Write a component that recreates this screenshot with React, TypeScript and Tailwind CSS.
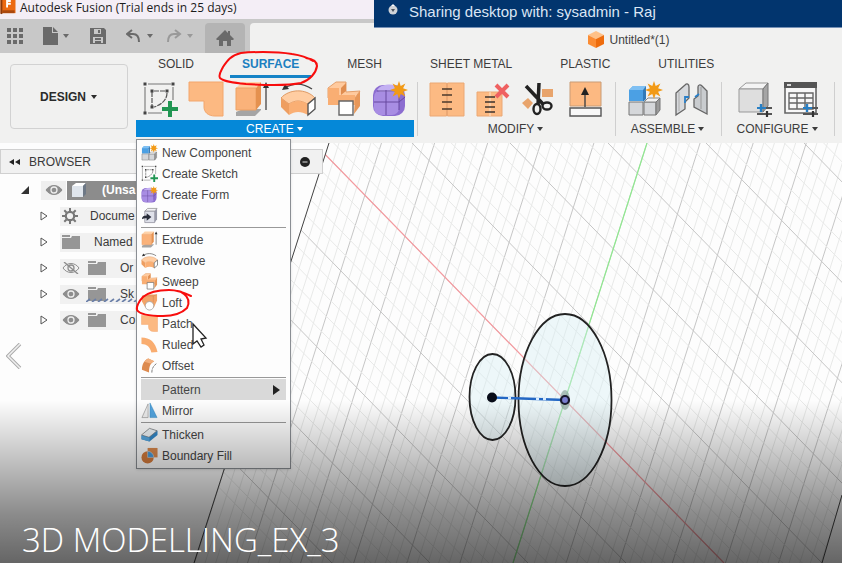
import React from "react";

type IconProps = { className?: string };
type IconType = (props: IconProps) => React.ReactElement;

function Svg({ className, children }: { className?: string; children: React.ReactNode }) {
  return (
    <svg viewBox="0 0 36 36" className={className} fill="none" aria-hidden="true">
      {children}
    </svg>
  );
}

const Star = ({ x, y }: { x: number; y: number }) => (
  <path
    transform={`translate(${x} ${y})`}
    d="M0-9l1.7 4.9L6.4-6.4 4.1-1.7 9 0 4.1 1.7 6.4 6.4 1.7 4.1 0 9-1.7 4.1-6.4 6.4-4.1 1.7-9 0l4.9-1.7L-6.4-6.4l4.7 2.3z"
    fill="#f29a16"
  />
);

const SketchIcon: IconType = ({ className }) => (
  <Svg className={className}>
    <path d="M6 3h23M3 6v25M31 6v13M6 32h14" stroke="#777" strokeWidth="1.1" />
    <path d="M10 11v14M12 10h13M25 12c0 7-6 12-13 14" stroke="#555" strokeWidth="1.2" strokeDasharray="5 1" />
    <path d="M1.500 1.500h3v3h-3zM29.500 1.500h3v3h-3zM1.500 30.500h3v3h-3zM8.500 8.500h3v3h-3zM23.500 8.500h3v3h-3zM8.500 24.500h3v3h-3z" fill="#444" />
    <path d="M26 20h4v6h6v4h-6v6h-4v-6h-6v-4h6z" fill="#219653" />
  </Svg>
);

const PatchIcon: IconType = ({ className }) => (
  <Svg className={className}>
    <path d="M1 1h34v34h-8c-7 0-11-4-11-9v-6H1z" fill="#fcb982" stroke="#f3a66c" />
  </Svg>
);

const ExtrudeIcon: IconType = ({ className }) => (
  <Svg className={className}>
    <path d="M2 31l7-3h18v1l-6 6H2z" fill="#a5a5a5" />
    <path d="M2 7l6-6h19l-5 6z" fill="#ffd3aa" />
    <path d="M2 7h20v22H2z" fill="#fab27a" stroke="#eda164" />
    <path d="M22 7l5-6v22l-5 6z" fill="#e5914f" />
    <path d="M32 29V5" stroke="#444" strokeWidth="1.3" />
    <path d="M32 1l3 6h-6z" fill="#333" />
  </Svg>
);

const RevolveIcon: IconType = ({ className }) => (
  <Svg className={className}>
    <path d="M1 17c8-9 25-10 34 0l-8 6c-6-4-12-4-18 0z" fill="#ffcda2" stroke="#df9b66" />
    <path d="M1 17l8 6v11l-8-8z" fill="#ee9e60" />
    <path d="M9 23c6-4 12-4 19 0v11c-7-4-13-4-19 0z" fill="#faaf74" />
    <path d="M28 23l7-6v11l-7 6z" fill="#fff" stroke="#555" strokeWidth="1.4" />
    <path d="M5 7c8-5 18-5 27 1" stroke="#444" strokeWidth="1.3" />
    <path d="M2 9l3-6 4 5z" fill="#333" />
  </Svg>
);

const SweepIcon: IconType = ({ className }) => (
  <Svg className={className}>
    <path d="M2 7l8-6h10v10l14-1-5 7H2z" fill="#ffca9e" stroke="#e4a06c" />
    <path d="M2 7h11v7h16v10H2z" fill="#f9ae73" />
    <path d="M20 2l-5 5v7l5-4z" fill="#e08d4f" />
    <path d="M29 17l5-7v15l-6 8z" fill="#e79759" />
    <path d="M13 20h14v14H13z" fill="#fff" stroke="#666" strokeWidth="1.4" />
  </Svg>
);

const FormIcon: IconType = ({ className }) => (
  <Svg className={className}>
    <rect x="1" y="4" width="32" height="31" rx="10" fill="#8c6dd0" />
    <rect x="2" y="9" width="25" height="25" rx="7" fill="#a88de3" />
    <path d="M5 9c4-6 16-7 22-3l-5 5H8z" fill="#c3b0f2" />
    <path d="M2 21h25l6-5M14 9v25M5 10h20l5-4M27 11v18" stroke="#67499f" />
    <Star x={27} y={9} />
  </Svg>
);

const StitchIcon: IconType = ({ className }) => (
  <Svg className={className}>
    <path d="M1 2h16.500v33H1zM18.500 2H35v33H18.500z" fill="#fcba83" stroke="#eba874" />
    <path d="M13 8h10M13 14h10M13 21h10M13 28h10" stroke="#4b3a2d" strokeWidth="1.6" />
  </Svg>
);

const UnstitchIcon: IconType = ({ className }) => (
  <Svg className={className}>
    <path d="M2 11h25v24H2z" fill="#fcba83" stroke="#eba874" />
    <path d="M15 11v24" stroke="#ffe4cb" />
    <path d="M10 16h10M10 21h10M10 26h10M10 31h10" stroke="#3c332e" strokeWidth="1.6" />
    <path d="M21 4l12 12M33 4L21 16" stroke="#ef6161" strokeWidth="4" />
  </Svg>
);

const TrimIcon: IconType = ({ className }) => (
  <Svg className={className}>
    <path d="M1 22l6-5 5 5-5 6zM21 8h11v8H21z" fill="#e8a46c" />
    <path d="M5 5l17 18M18 2l-1 22" stroke="#222" strokeWidth="3.5" />
    <ellipse cx="26" cy="25" rx="4.500" ry="3.500" stroke="#222" strokeWidth="2.4" />
    <ellipse cx="16" cy="28" rx="3.500" ry="5" stroke="#222" strokeWidth="2.4" />
  </Svg>
);

const ThickSurfaceIcon: IconType = ({ className }) => (
  <Svg className={className}>
    <path d="M3 1h31v24H3z" fill="#fcb982" stroke="#c99c76" />
    <path d="M3 27h31v8H3z" fill="#f8f8f8" stroke="#555" strokeWidth="1.4" />
    <path d="M18 26V11" stroke="#444" strokeWidth="1.4" />
    <path d="M18 6l4 8h-8z" fill="#222" />
  </Svg>
);

const ComponentIcon: IconType = ({ className }) => (
  <Svg className={className}>
    <path d="M2 9l4-4h13l-3 4v11H2z" fill="#4ba0e4" />
    <path d="M2 9l4-4h13l-3 4z" fill="#7fc0f3" />
    <path d="M16 9l3-4v13l-3 3z" fill="#3179b8" />
    <path d="M2 21h14v13H2zM17 21h12v13H17z" fill="#d5d7da" stroke="#777" />
    <path d="M17 21l4-4h12l-4 4z" fill="#f2f2f2" stroke="#888" />
    <path d="M29 21l4-4v12l-4 5z" fill="#9a9a9a" stroke="#777" />
    <Star x={27} y={9} />
  </Svg>
);

const JointIcon: IconType = ({ className }) => (
  <Svg className={className}>
    <path d="M3 12l9-8c2-2 4-1 4 2v11l-4 4v7l-9 6z" fill="#d8dadd" stroke="#666" strokeWidth="1.3" />
    <path d="M6 11v19" stroke="#aaa" />
    <path d="M34 33l-13-7v-8l4-3V6c0-2 2-3 4-1l5 5z" fill="#c9cccf" stroke="#666" strokeWidth="1.3" />
    <path d="M28 6v22" stroke="#999" />
    <path d="M12 22v-6h4M22 16l4-3" stroke="#2a80c9" strokeWidth="1.8" />
  </Svg>
);

const Sliders = () => (
  <>
    <path d="M20 27h15M20 33h15" stroke="#555" strokeWidth="1.8" />
    <path d="M24 23v8" stroke="#287fc4" strokeWidth="2.4" />
    <path d="M20 27h9" stroke="#287fc4" strokeWidth="2" />
    <path d="M30 30v6" stroke="#333" strokeWidth="2.2" />
  </>
);

const ConfigureIcon: IconType = ({ className }) => (
  <Svg className={className}>
    <path d="M2 8l7-6h22l-5 6z" fill="#f4f4f4" stroke="#999" />
    <path d="M2 8h24v23H2z" fill="#dedede" stroke="#999" />
    <path d="M26 8l5-6v23l-5 6z" fill="#a5a5a5" stroke="#777" />
    <Sliders />
  </Svg>
);

const TableIcon: IconType = ({ className }) => (
  <Svg className={className}>
    <path d="M2 2h31v30H2z" fill="#f8f8f8" stroke="#666" strokeWidth="1.6" />
    <path d="M1 1h33v6H1z" fill="#555" />
    <path d="M4 3h4v2H4z" fill="#ddd" />
    <path d="M6 12h24v16H6zM6 17h24M6 22h24M14 12v16M22 12v16" stroke="#666" strokeWidth="1.4" />
    <Sliders />
  </Svg>
);

const DeriveIcon: IconType = ({ className }) => (
  <Svg className={className}>
    <path d="M8 9l6-6h20l-5 6z" fill="#f3f3f6" stroke="#888" strokeWidth="1.5" />
    <path d="M8 9h21v24H8z" fill="#dfe1ea" stroke="#8a8a96" strokeWidth="1.5" />
    <path d="M29 9l5-6v23l-5 7z" fill="#9799a8" />
    <path d="M2 26c0-6 4-8 10-8v-5l10 8-10 8v-5c-5 0-7 1-10 2z" fill="#292d3a" />
  </Svg>
);

const LoftIcon: IconType = ({ className }) => (
  <Svg className={className}>
    <path d="M2 4l8-3h24v13l-7 15L9 28 2 16z" fill="#f2a468" />
    <path d="M2 4h24l8-3M26 4v14" stroke="#c98350" />
    <circle cx="18" cy="25" r="9" fill="#fff" stroke="#999" strokeWidth="1.5" />
  </Svg>
);

const RuledIcon: IconType = ({ className }) => (
  <Svg className={className}>
    <path d="M1 3c18 0 30 10 34 31l-13 1C19 23 12 17 1 17z" fill="#f9ad70" />
  </Svg>
);

const OffsetIcon: IconType = ({ className }) => (
  <Svg className={className}>
    <path d="M2 27C2 15 7 7 15 3l13 6c-8 4-11 11-11 24z" fill="#dd8b50" />
    <path d="M7 10c2-3 5-6 9-7l12 6-8 5z" fill="#f2b07e" />
    <path d="M23 33c0-10 4-15 11-20" stroke="#777" strokeWidth="2" strokeDasharray="6 2" />
  </Svg>
);

const MirrorIcon: IconType = ({ className }) => (
  <Svg className={className}>
    <path d="M15 4v29H2z" fill="#eee" stroke="#999" strokeWidth="1.5" />
    <path d="M19 2l15 31H19z" fill="#54a5df" stroke="#3184bd" />
  </Svg>
);

const ThickenIcon: IconType = ({ className }) => (
  <Svg className={className}>
    <path d="M1 20L18 6l17 4v9L18 33 1 28z" fill="#3287c7" />
    <path d="M1 19L18 5l16 5-17 14z" fill="#eef3f6" stroke="#777" strokeWidth="1.5" />
    <path d="M1 20l17 5v8L1 28z" fill="#57a7df" />
  </Svg>
);

const BoundaryIcon: IconType = ({ className }) => (
  <Svg className={className}>
    <path d="M14 2h21v20H14z" fill="#dc8a4d" />
    <circle cx="14" cy="22" r="13" fill="#d67c3c" />
    <path d="M14 9a13 13 0 0 1 13 13H14z" fill="#4a9cda" stroke="#eee" />
  </Svg>
);

const Caret = ({ className = "" }: IconProps) => (
  <svg viewBox="0 0 8 6" className={`h-1.5 w-2 ${className}`} fill="currentColor" aria-hidden="true">
    <path d="M1 1h6L4 5z" />
  </svg>
);

function TitleBar() {
  return (
    <div className="flex h-[19px] items-start bg-[#f4eef6] text-[#1c1c1c]">
      <svg viewBox="0 0 16 16" className="h-[15px] w-4" aria-hidden="true">
        <path d="M0 0h16v14H0z" fill="#ec6a12" />
        <path d="M0 0h2v15H0z" fill="#8c3a0b" />
        <path d="M2 11h13v3H2z" fill="#a9480f" />
        <path d="M6 0h5v2H8v1h3v2H8v3H6z" fill="#fff" />
      </svg>
      <h1 className="pl-1 font-['Open_Sans','Noto_Sans',sans-serif] text-xs leading-[15px]">
        Autodesk Fusion (Trial ends in 25 days)
      </h1>
    </div>
  );
}

function QuickAccess() {
  return (
    <div className="flex h-[34px] items-end bg-[#c8c8c8] text-[#6a6a6a]">
      <div className="flex h-full w-[205px] items-center pl-[7px]">
        <button aria-label="Data panel">
          <svg viewBox="0 0 16 16" className="size-4" fill="currentColor">
            <path d="M0 0h4v4H0zM6 0h4v4H6zM12 0h4v4h-4zM0 6h4v4H0zM6 6h4v4H6zM12 6h4v4h-4zM0 12h4v4H0zM6 12h4v4H6zM12 12h4v4h-4z" />
          </svg>
        </button>
        <button aria-label="File" className="ml-5 flex items-center gap-1">
          <svg viewBox="0 0 15 18" className="h-[18px] w-[15px]" fill="currentColor">
            <path d="M0 0h9v6h6v12H0zM10 0l5 5h-5z" />
          </svg>
          <Caret />
        </button>
        <button aria-label="Save" className="ml-5">
          <svg viewBox="0 0 16 16" className="size-4">
            <path d="M0 0h14l2 2v14H0z" fill="currentColor" />
            <path d="M4 1h7v5H4zM3 9h10v6H3z" fill="#c8c8c8" />
            <path d="M8 2h2v3H8zM5 10h6v2H5zM5 13h6v2H5z" fill="currentColor" />
          </svg>
        </button>
        <button aria-label="Undo" className="ml-5 flex items-center gap-1">
          <svg viewBox="0 0 16 14" className="h-3.5 w-4" fill="none" stroke="currentColor" strokeWidth="2">
            <path d="M6 1L1 5l5 4M1 5h6c4 0 6 3 6 8" />
          </svg>
          <Caret />
        </button>
        <button aria-label="Redo" className="ml-3 flex items-center gap-1 text-[#999]">
          <svg viewBox="0 0 16 14" className="h-3.5 w-4" fill="none" stroke="currentColor" strokeWidth="2">
            <path d="M9 1l5 4-5 4M14 5H8c-4 0-6 3-6 8" />
          </svg>
          <Caret />
        </button>
      </div>
      <button aria-label="Home" className="mr-[5px] flex h-[30px] w-10 items-center justify-center rounded-t bg-[#b4b4b4]">
        <svg viewBox="0 0 18 16" className="h-4 w-[18px]" fill="currentColor">
          <path d="M9 0l3 3V1h2v4l4 4-1 1h-2v6h-4v-5H7v5H3v-6H1L0 9z" />
        </svg>
      </button>
      <button className="flex h-[30px] flex-1 items-center justify-center gap-[5px] rounded-tl bg-[#f1f1f0] pt-[3px] pl-[166px] text-xs text-[#3f3f3f]">
        <svg viewBox="0 0 16 17" className="h-[17px] w-4" aria-hidden="true">
          <path d="M8 0l8 4-8 4-8-4z" fill="#ffc187" />
          <path d="M0 4l8 4v9l-8-4z" fill="#fb8c33" />
          <path d="M16 4L8 8v9l8-4z" fill="#ee6c0d" />
        </svg>
        Untitled*(1)
      </button>
    </div>
  );
}

const tabs = ["SOLID", "SURFACE", "MESH", "SHEET METAL", "PLASTIC", "UTILITIES"];

const groups: { label: string; active?: boolean; width: string; icons: [string, IconType][] }[] = [
  {
    label: "CREATE",
    active: true,
    width: "w-[278px]",
    icons: [
      ["Create Sketch", SketchIcon],
      ["Patch", PatchIcon],
      ["Extrude", ExtrudeIcon],
      ["Revolve", RevolveIcon],
      ["Sweep", SweepIcon],
      ["Create Form", FormIcon],
    ],
  },
  {
    label: "MODIFY",
    width: "w-[192px]",
    icons: [
      ["Stitch", StitchIcon],
      ["Unstitch", UnstitchIcon],
      ["Trim", TrimIcon],
      ["Press Pull", ThickSurfaceIcon],
    ],
  },
  {
    label: "ASSEMBLE",
    width: "w-[100px]",
    icons: [
      ["New Component", ComponentIcon],
      ["Joint", JointIcon],
    ],
  },
  {
    label: "CONFIGURE",
    width: "w-[107px]",
    icons: [
      ["Configure", ConfigureIcon],
      ["Configuration Table", TableIcon],
    ],
  },
];

function Ribbon() {
  return (
    <div className="flex h-[90px] bg-[#f1f1f0] text-xs text-[#3c3c3c]">
      <button className="mt-[11px] mr-2 ml-2.5 flex h-[65px] w-[118px] shrink-0 items-center justify-center gap-1 rounded border border-[#d2d2d2] font-bold text-[#2b2b2b]">
        DESIGN <Caret />
      </button>
      <div className="min-w-0 flex-1">
        <nav className="flex h-[25px] gap-6 pl-2.5">
          {tabs.map((tab) => (
            <button
              key={tab}
              className={
                tab === "SURFACE"
                  ? "border-b-3 border-[#1583c6] px-3 font-bold whitespace-nowrap text-[#1b7fc0]"
                  : "border-b-3 border-transparent px-3 whitespace-nowrap"
              }
            >
              {tab}
            </button>
          ))}
        </nav>
        <div className="flex">
          {groups.map((g) => (
            <div key={g.label} className="flex shrink-0">
              <section className={g.width}>
                <div className="flex h-[42px] items-center justify-center">
                  {g.icons.map(([name, Icon]) => (
                    <button key={name} aria-label={name} className="flex w-[46px] justify-center">
                      <Icon className="size-9" />
                    </button>
                  ))}
                </div>
                <button
                  className={
                    g.active
                      ? "flex h-[17px] w-full items-center justify-center gap-0.5 bg-[#0588d8] text-white"
                      : "flex h-[17px] w-full items-center justify-center gap-0.5"
                  }
                >
                  {g.label} <Caret />
                </button>
              </section>
              <div className="mr-[2px] ml-[3px] mt-1 h-[54px] w-px bg-[#cfcfcf]" />
            </div>
          ))}
        </div>
      </div>
    </div>
  );
}

const Eye = ({ off = false }: { off?: boolean }) => (
  <svg viewBox="0 0 18 12" className="h-3 w-[18px] shrink-0" fill="none" aria-hidden="true">
    <path d="M1 6c4-6 12-6 16 0-4 6-12 6-16 0z" fill={off ? "none" : "#8e8e8e"} stroke="#8e8e8e" />
    <circle cx="9" cy="6" r="3" fill={off ? "none" : "#8e8e8e"} stroke={off ? "#8e8e8e" : "#eee"} strokeWidth="1.3" />
    {off && <path d="M2 0l14 12" stroke="#8e8e8e" strokeWidth="1.4" />}
  </svg>
);

const Folder = () => (
  <svg viewBox="0 0 18 14" className="h-3.5 w-[18px] shrink-0" aria-hidden="true">
    <path d="M0 0h8v2H0zM0 3h9l1-2h8v13H0z" fill="#969696" />
  </svg>
);

const Gear = () => (
  <svg viewBox="0 0 16 16" className="size-4" fill="none" stroke="#777" aria-hidden="true">
    <circle cx="8" cy="8" r="4.2" strokeWidth="2.2" />
    <path d="M8 0v3M8 13v3M0 8h3M13 8h3M2.3 2.3l2.2 2.2M11.500 11.500l2.2 2.2M13.7 2.3l-2.2 2.2M4.500 11.500l-2.2 2.2" strokeWidth="2" />
  </svg>
);

const nodes = [
  { label: "Docume", kind: "gear" },
  { label: "Named", kind: "folder" },
  { label: "Or", kind: "hidden" },
  { label: "Sk", kind: "visible" },
  { label: "Co", kind: "visible" },
];

function BrowserPanel() {
  return (
    <aside className="relative w-[323px] pt-1.5 text-xs text-[#3a3a3a]">
      <div className="flex h-[25px] items-center border border-[#d0d0d0] bg-[#f1f1f1] pr-3 pl-[7px]">
        <svg viewBox="0 0 12 8" className="h-2 w-3" fill="#222" aria-hidden="true">
          <path d="M6 1v6L1 4zM12 1v6L7 4z" />
        </svg>
        <h2 className="pl-[9px]">BROWSER</h2>
        <button aria-label="Minimize" className="ml-auto">
          <svg viewBox="0 0 10 10" className="size-2.5">
            <circle cx="5" cy="5" r="5" fill="#222" />
            <path d="M2.500 5h5" stroke="#ddd" />
          </svg>
        </button>
      </div>
      <ul className="w-[137px] whitespace-nowrap">
        <li className="mt-[3px] flex h-[26px] items-center">
          <svg viewBox="0 0 8 8" className="ml-[21px] size-2 shrink-0" aria-hidden="true">
            <path d="M8 0v8H0z" fill="#333" />
          </svg>
          <span className="ml-3 flex h-[19px] w-[25px] shrink-0 items-center justify-center bg-[#efefef]">
            <Eye />
          </span>
          <span className="ml-px flex h-[19px] flex-1 items-center bg-[#8c8c8c] pl-1 font-bold text-white">
            <svg viewBox="0 0 16 16" className="size-4 shrink-0" aria-hidden="true">
              <path d="M1 4l4-3h10l-3 3z" fill="#fff" />
              <path d="M1 4h11v11H1z" fill="#dfe5ec" />
              <path d="M12 4l3-3v11l-3 3z" fill="#6d7886" />
            </svg>
            <span className="pl-[15px]">(Unsa</span>
          </span>
        </li>
        {nodes.map((n) => (
          <li key={n.label} className="flex h-[26px] items-center">
            <svg viewBox="0 0 8 10" className="ml-10 h-2.5 w-2 shrink-0" fill="none" aria-hidden="true">
              <path d="M1 1l6 4-6 4z" stroke="#555" />
            </svg>
            <span className="ml-3 flex h-[19px] flex-1 items-center bg-[#f1f1f1]">
              {n.kind === "gear" && <span className="pr-3 pl-0.5"><Gear /></span>}
              {n.kind === "folder" && <span className="pr-3.5 pl-0.5"><Folder /></span>}
              {(n.kind === "hidden" || n.kind === "visible") && (
                <span className="flex items-center gap-2 pr-3.5 pl-0.5">
                  <Eye off={n.kind === "hidden"} />
                  <Folder />
                </span>
              )}
              {n.label}
            </span>
          </li>
        ))}
      </ul>
      <svg viewBox="0 0 50 4" className="absolute top-[155px] left-[86px] h-1 w-[50px]" aria-hidden="true">
        {Array.from({ length: 9 }, (_, i) => (
          <path key={i} d={`M${i * 6} 4l4-3`} stroke="#6a7fa8" strokeWidth="1.6" />
        ))}
      </svg>
      <button aria-label="Previous" className="mt-2.5 ml-1.5 block">
        <svg viewBox="0 0 16 26" className="h-[26px] w-4" fill="none">
          <path d="M14 1L2 13l12 12" stroke="#aaa" strokeWidth="3.500" />
          <path d="M14 1L2 13l12 12" stroke="#f0f0f0" strokeWidth="1.500" />
        </svg>
      </button>
    </aside>
  );
}

const menu: (null | { label: string; icon?: IconType; open?: boolean })[] = [
  { label: "New Component", icon: ComponentIcon },
  { label: "Create Sketch", icon: SketchIcon },
  { label: "Create Form", icon: FormIcon },
  { label: "Derive", icon: DeriveIcon },
  null,
  { label: "Extrude", icon: ExtrudeIcon },
  { label: "Revolve", icon: RevolveIcon },
  { label: "Sweep", icon: SweepIcon },
  { label: "Loft", icon: LoftIcon },
  { label: "Patch", icon: PatchIcon },
  { label: "Ruled", icon: RuledIcon },
  { label: "Offset", icon: OffsetIcon },
  null,
  { label: "Pattern", open: true },
  { label: "Mirror", icon: MirrorIcon },
  null,
  { label: "Thicken", icon: ThickenIcon },
  { label: "Boundary Fill", icon: BoundaryIcon },
];

function CreateMenu() {
  return (
    <div role="menu" className="absolute top-[139px] left-[136px] w-[155px] border border-[#8b8f94] bg-[#fdfdfd] px-1 py-[2px] text-xs text-[#454545] shadow-sm">
      {menu.map((m, i) =>
        m ? (
          <button
            key={m.label}
            role="menuitem"
            className={
              m.open
                ? "flex h-[21px] w-full items-center bg-[#d9d9d9] pr-1.5"
                : "flex h-[21px] w-full items-center pr-1.5"
            }
          >
            <span className="mr-1 w-[17px] shrink-0">{m.icon && <m.icon className="size-[17px]" />}</span>
            {m.label}
            {m.open && (
              <svg viewBox="0 0 7 10" className="ml-auto h-2.5 w-[7px]" fill="#222" aria-hidden="true">
                <path d="M0 0l7 5-7 5z" />
              </svg>
            )}
          </button>
        ) : (
          <hr key={i} className="my-px border-[#999]" />
        ),
      )}
    </div>
  );
}

const range = (from: number, to: number) => Array.from({ length: to - from + 1 }, (_, i) => from + i);

function Canvas() {
  return (
    <svg viewBox="0 0 842 563" preserveAspectRatio="xMinYMin slice" className="absolute inset-0 size-full" fill="none" aria-hidden="true">
      <clipPath id="plane">
        <path d="M329 143H950L822 563H194z" />
      </clipPath>
      <g clipPath="url(#plane)">
        {range(-30, 34).map((i) => (
          <path key={`s${i}`} d={`M${647 + i * 10.62} 143l-134 420`} stroke={i % 5 ? "#e8e9e8" : "#c6c6c6"} />
        ))}
        {range(-22, 30).map((i) => (
          <path key={`d${i}`} d={`M${314 + i * 19.6} 143l410 420`} stroke={i % 5 ? "#e8e9e8" : "#c6c6c6"} />
        ))}
        <path d="M314 143l410 420" stroke="#f59a9f" strokeWidth="1.2" />
        <path d="M647 143L513 563" stroke="#8fe98f" strokeWidth="1.2" />
      </g>
      <path d="M329 143L194 563M842 495l-20 68" stroke="#444" />
      <g stroke="#222" strokeWidth="1.8" fill="#d5edf2" fillOpacity="0.4">
        <ellipse cx="492.500" cy="397" rx="23" ry="43" />
        <ellipse cx="565" cy="400" rx="46.500" ry="86" />
      </g>
      <ellipse cx="565" cy="400" rx="5" ry="10" fill="#8ca79c" fillOpacity="0.7" />
      <path d="M492 397.500l73 2.500" stroke="#2367c4" strokeWidth="2.400" />
      <path d="M508 398h3M536 399h3M543 399h3" stroke="#d8ecff" strokeWidth="2.400" />
      <circle cx="492" cy="397.500" r="5" fill="#080c18" />
      <circle cx="565" cy="400" r="4" fill="#7a7fd0" stroke="#17182b" strokeWidth="2.200" />
    </svg>
  );
}

function Annotations() {
  return (
    <svg viewBox="0 0 842 563" preserveAspectRatio="xMinYMin slice" className="pointer-events-none absolute inset-0 size-full" fill="none" aria-hidden="true">
      <g stroke="#f80d0d" strokeWidth="2" strokeLinecap="round">
        <path d="M313 61c-8-5-14-6-21-7-18-3-42-2-51-1-10 2-14 8-18 14-2 4-5 8-3 11 4 4 15 5 26 6 16 1 40 2 55-1 9-3 15-10 16-17 0-4-4-7-11-8" />
        <path d="M191 296c-6-3-14-6-22-6-10 0-20 2-26 7-4 4-7 10-6 13 3 5 15 6 26 6 10 0 19-3 24-8 3-6 1-11-3-14-2-2-5-3-7-3" />
      </g>
      <path d="M193 324v20l4-3 4 6 3-2-3-6 5-1z" fill="#fff" stroke="#222" strokeWidth="1.3" />
    </svg>
  );
}

export default function App() {
  return (
    <main className="relative h-screen w-full overflow-hidden bg-[#fdfdfd] font-['Liberation_Sans',Arial,sans-serif]">
      <Canvas />
      <div className="relative">
        <TitleBar />
        <QuickAccess />
        <Ribbon />
        <BrowserPanel />
      </div>
      <div className="absolute top-0 right-0 left-[374px] flex h-7 items-start border-b border-[#7590b5] bg-[#02356e] pt-[3px] pl-3.5 text-[15px] leading-[18px] text-[#dbe6f5]">
        <svg viewBox="0 0 10 12" className="mt-px mr-[11px] h-3 w-2.5" aria-hidden="true">
          <circle cx="5" cy="6" r="4.500" fill="#cfd3d8" />
          <path d="M3 2h4l-2-2z" fill="#fff" />
          <path d="M3 5h4L5 8z" fill="#4d555f" />
        </svg>
        Sharing desktop with: sysadmin - Raj
      </div>
      <CreateMenu />
      <Annotations />
      <div className="pointer-events-none absolute inset-x-0 bottom-0 flex h-[163px] items-end bg-linear-to-b from-transparent via-black/45 via-70% to-black/60 px-[22px]">
        <p className="font-['Open_Sans','Noto_Sans',sans-serif] text-[33px] leading-[46px] font-light text-white">
          3D MODELLING_EX_3
        </p>
      </div>
    </main>
  );
}
